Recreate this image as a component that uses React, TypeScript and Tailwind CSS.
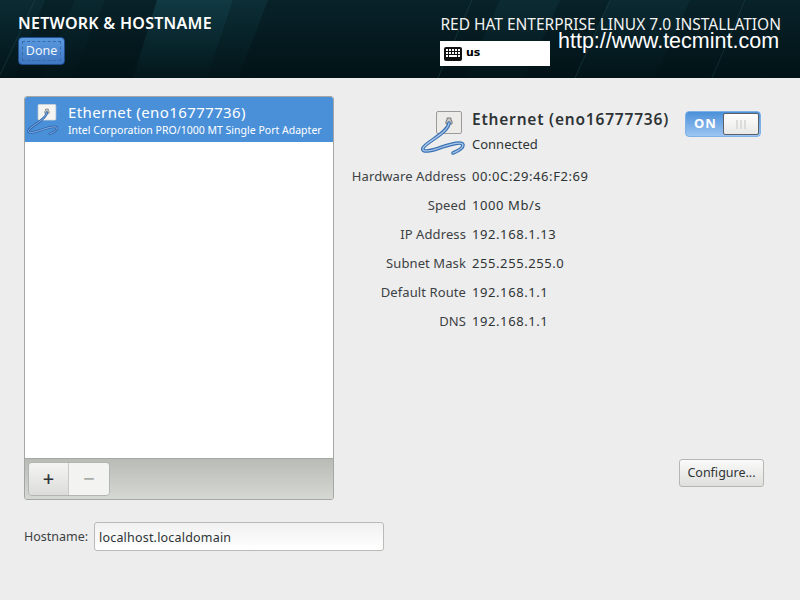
const details = [
  ["Hardware Address", "00:0C:29:46:F2:69"],
  ["Speed", "1000 Mb/s"],
  ["IP Address", "192.168.1.13"],
  ["Subnet Mask", "255.255.255.0"],
  ["Default Route", "192.168.1.1"],
  ["DNS", "192.168.1.1"],
];

const HeaderStripes = () => (
  <svg className="absolute inset-0" width="800" height="78" viewBox="0 0 800 78">
    <defs>
      <linearGradient id="band" x1="0" y1="0" x2="0" y2="1">
        <stop offset="0" stopColor="#14444f" stopOpacity="0.7" />
        <stop offset="1" stopColor="#0c343d" stopOpacity="0.1" />
      </linearGradient>
    </defs>
    <polygon points="157,0 233,0 207,78 133,78" fill="url(#band)" />
    <polygon points="233,0 268,0 238,78 207,78" fill="url(#band)" opacity="0.5" />
    <polygon points="0,0 45,0 14,78 0,78" fill="url(#band)" opacity="0.4" />
    <polygon points="75,0 105,0 72,78 42,78" fill="url(#band)" opacity="0.25" />
    <polygon points="500,0 560,0 525,78 465,78" fill="url(#band)" opacity="0.4" />
    <polygon points="610,0 690,0 655,78 575,78" fill="url(#band)" opacity="0.35" />
    <line x1="35" y1="0" x2="0" y2="75" stroke="#2b5a63" strokeWidth="1" opacity="0.35" />
    <line x1="472" y1="0" x2="438" y2="78" stroke="#2b5a63" strokeWidth="1" opacity="0.35" />
    <line x1="610" y1="0" x2="575" y2="78" stroke="#2b5a63" strokeWidth="1" opacity="0.35" />
    <line x1="745" y1="0" x2="712" y2="78" stroke="#2b5a63" strokeWidth="1" opacity="0.3" />
  </svg>
);

const KeyboardIcon = () => (
  <svg width="18" height="14" viewBox="0 0 18 14">
    <rect x="0" y="0" width="18" height="14" rx="2" fill="#111" />
    {[2, 5, 8, 11, 14].map((x) => (
      <rect key={x} x={x} y="2" width="2" height="2" fill="#fff" />
    ))}
    {[2, 5, 8, 11, 14].map((x) => (
      <rect key={x} x={x} y="5" width="2" height="2" fill="#fff" />
    ))}
    <rect x="2" y="8" width="2" height="2" fill="#fff" />
    <rect x="5" y="8" width="8" height="2" fill="#fff" />
    <rect x="14" y="8" width="2" height="2" fill="#fff" />
  </svg>
);

const CableIcon = ({ size, selected }: { size: number; selected?: boolean }) => (
  <svg width={size} height={size} viewBox="0 0 48 48" className="shrink-0">
    <rect x="18.5" y="3.5" width="25" height="22" rx="1.5" fill={selected ? "#f4f4f2" : "#ecebe8"} stroke={selected ? "#d8d8d8" : "#9a9a96"} />
    <path d="M28 16v-3l1-1v-2h4v2l1 1v3z" fill="#c9c9c6" stroke="#77777a" strokeWidth="1" />
    <path
      d="M31 15C30 25 8 34 5 40C3 45 14 43 24 39C34 36 44 33 45 37C45 40 40 43 35 45"
      fill="none"
      stroke={selected ? "#2f66ad" : "#3b71b3"}
      strokeWidth="3.6"
      strokeLinecap="round"
    />
    <path
      d="M31 15C30 25 8 34 5 40C3 45 14 43 24 39C34 36 44 33 45 37C45 40 40 43 35 45"
      fill="none"
      stroke={selected ? "#8fb5e4" : "#a9c8ea"}
      strokeWidth="1.3"
      strokeLinecap="round"
    />
  </svg>
);

export default function App() {
  return (
    <div className="w-[800px] h-[600px] flex flex-col overflow-hidden bg-[#ededed] text-[#2e3436] font-['Noto_Sans',sans-serif]">
      <header className="relative h-[78px] shrink-0 bg-gradient-to-b from-[#082229] to-[#021317] text-white">
        <HeaderStripes />
        <div className="relative h-full flex justify-between pl-[18px] pr-[19px]">
          <div className="flex flex-col">
            <h1 className="mt-[13px] text-[16px] leading-[20px] font-semibold tracking-[0.27px]">NETWORK &amp; HOSTNAME</h1>
            <button className="mt-[4px] w-[47px] h-[28px] p-[3px] rounded-[4px] border border-[#1e4f8c] bg-gradient-to-b from-[#5a9ae0] to-[#3f78c2] text-[12.5px]">
              <span className="flex h-full items-center justify-center border border-dashed border-[#3a6aa5] text-[#eef4fb]">
                Done
              </span>
            </button>
          </div>
          <div className="flex flex-col w-[341px]">
            <p className="mt-[14px] text-[15.5px] leading-[20px] whitespace-nowrap text-right text-[#f2f2f2]">
              RED HAT ENTERPRISE LINUX 7.0 INSTALLATION
            </p>
            <div className="mt-[7px] w-[110px] h-[25px] bg-white flex items-center gap-[4px] pl-[4px] text-black">
              <KeyboardIcon />
              <span className="text-[11px] font-bold font-['DejaVu_Sans',sans-serif]">us</span>
            </div>
          </div>
        </div>
        <span className="absolute left-[558px] top-[28px] text-[21.5px] leading-[26px] font-['Liberation_Sans',sans-serif] text-white whitespace-nowrap">
          http://www.tecmint.com
        </span>
      </header>

      <main className="flex flex-1 min-h-0 pt-[18px] pl-[24px] pr-[36px]">
        <div className="w-[310px] h-[404px] shrink-0 flex flex-col border border-[#a5a7a2] rounded-[3px] overflow-hidden">
          <div className="flex-1 bg-white">
            <div className="h-[45px] bg-[#4a90d9] flex text-white">
              <div className="pt-[5px]">
                <CableIcon size={34} selected />
              </div>
              <div className="ml-[9px] flex flex-col pt-[5px] whitespace-nowrap">
                <span className="text-[15px] leading-[20px] tracking-[0.4px]">Ethernet (eno16777736)</span>
                <span className="text-[10.5px] leading-[14px] mt-[1px] tracking-[0.01px]">Intel Corporation PRO/1000 MT Single Port Adapter</span>
              </div>
            </div>
          </div>
          <div className="h-[41px] bg-gradient-to-b from-[#b9bbb6] to-[#d6d8d4] border-t border-[#a5a7a2] px-[3px] pt-[3px]">
            <div className="flex w-[82px] h-[34px] rounded-[4px] border border-[#b3b5b0] overflow-hidden">
              <button className="w-[40px] flex items-center justify-center bg-gradient-to-b from-[#f4f4f3] to-[#dcdcda] border-r border-[#c9cac6] text-[20px] font-medium text-[#2e3436]">
                +
              </button>
              <button className="flex-1 flex items-center justify-center bg-[#f3f3f2] text-[20px] font-medium text-[#a9aba8]">
                −
              </button>
            </div>
          </div>
        </div>

        <div className="flex-1 flex flex-col">
          <div className="flex pl-[84px] pt-[12px] h-[59px]">
            <CableIcon size={48} />
            <div className="ml-[6px] flex flex-col">
              <span className="mt-[1px] text-[15.5px] leading-[20px] font-semibold tracking-[0.8px] whitespace-nowrap">Ethernet (eno16777736)</span>
              <span className="mt-[6px] text-[13px] leading-[18px]">Connected</span>
            </div>
            <div className="ml-auto mr-[3px] mt-[3px] w-[76px] h-[26px] rounded-[4px] border border-[#7fb0e6] bg-gradient-to-b from-[#4a90d9] to-[#9cc5f2] flex items-center justify-between pl-[8px] pr-[1px] text-white">
              <span className="text-[13px] font-bold tracking-[1px]">ON</span>
              <span className="w-[36px] h-[22px] rounded-[2px] border border-[#5c6066] bg-gradient-to-b from-[#ffffff] to-[#e8e8e6] flex items-center justify-center gap-[2px]">
                <i className="w-[2px] h-[9px] bg-[#dcdcda]" />
                <i className="w-[2px] h-[9px] bg-[#dcdcda]" />
                <i className="w-[2px] h-[9px] bg-[#dcdcda]" />
              </span>
            </div>
          </div>
          <dl className="mt-[7px] grid grid-cols-[132px_auto] justify-start gap-x-[6px] text-[13px] leading-[29px]">
            {details.map(([label, value]) => (
              <div key={label} className="contents">
                <dt className="text-right text-[#3c4144] whitespace-nowrap tracking-[0.1px]">{label}</dt>
                <dd className="text-[#2e3436] tracking-[0.58px]">{value}</dd>
              </div>
            ))}
          </dl>
          <button className="mt-auto mb-[35px] self-end w-[85px] h-[28px] rounded-[3px] border border-[#b5b7b3] bg-gradient-to-b from-[#fafafa] to-[#dfdfdd] text-[12.5px] text-[#2e3436]">
            Configure...
          </button>
        </div>
      </main>

      <div className="flex items-center h-[29px] pl-[24px] mb-[49px] text-[12.5px]">
        <label className="w-[70px] text-[#3c4144] pt-[1px]">Hostname:</label>
        <input
          readOnly
          value="localhost.localdomain"
          className="w-[290px] h-[29px] px-[4px] pt-[1px] rounded-[3px] border border-[#b9bbb6] bg-gradient-to-b from-[#f1f1f1] to-[#ffffff] text-[#2e3436] tracking-[0.2px]"
        />
      </div>
    </div>
  );
}
